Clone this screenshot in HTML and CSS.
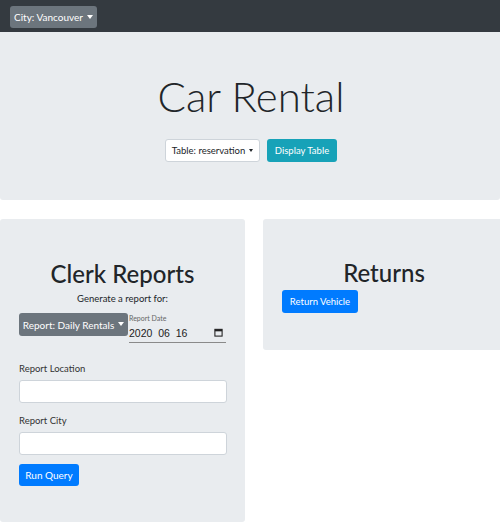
FILE: index.html
```html
<!DOCTYPE html>
<html>
<head>
<meta charset="utf-8">
<link rel="stylesheet" href="styles.css">
</head>
<body>
<nav class="navbar">
  <button class="btn btn-secondary nav-btn">City: Vancouver <span class="caret"></span></button>
</nav>
<header class="jumbotron">
  <h1 class="display">Car Rental</h1>
  <div class="jumbo-actions">
    <button class="btn btn-light">Table: reservation <span class="caret small"></span></button>
    <button class="btn btn-info">Display Table</button>
  </div>
</header>
<main class="row">
  <section class="card card-left">
    <h2 class="card-title">Clerk Reports</h2>
    <p class="lead-small">Generate a report for:</p>
    <div class="report-line">
      <button class="btn btn-secondary report-btn">Report: Daily Rentals <span class="caret"></span></button>
      <div class="date-field">
        <span class="date-label">Report Date</span>
        <div class="date-input">
          <span class="date-value">2020&nbsp;&nbsp;06&nbsp;&nbsp;16</span>
          <svg class="cal" viewBox="0 0 10 10" width="9" height="9"><rect x="1" y="1.5" width="8" height="7.5" fill="none" stroke="#222" stroke-width="1.2"/><rect x="1" y="1.5" width="8" height="2.2" fill="#222"/></svg>
        </div>
      </div>
    </div>
    <label class="field-label first">Report Location</label>
    <input class="text-input" type="text">
    <label class="field-label">Report City</label>
    <input class="text-input" type="text">
    <button class="btn btn-primary run-btn">Run Query</button>
  </section>
  <section class="card card-right">
    <h2 class="card-title returns-title">Returns</h2>
    <button class="btn btn-primary return-btn">Return Vehicle</button>
  </section>
</main>
</body>
</html>
```
FILE: styles.css
```css
* { box-sizing: border-box; }
html, body { margin: 0; padding: 0; }
body {
  width: 500px;
  height: 524px;
  overflow: hidden;
  background: #fff;
  font-family: Lato, "Noto Sans", sans-serif;
  color: #212529;
}
.btn {
  font-family: Lato, "Noto Sans", sans-serif;
  border: 1px solid transparent;
  border-radius: 3px;
  cursor: pointer;
  display: inline-flex;
  align-items: center;
  justify-content: center;
  padding: 0;
}
.caret {
  display: inline-block;
  width: 0;
  height: 0;
  border-left: 3px solid transparent;
  border-right: 3px solid transparent;
  border-top: 4px solid currentColor;
  margin-left: 4px;
  margin-top: -1px;
}
.caret.small {
  border-left-width: 2px;
  border-right-width: 2px;
  border-top-width: 3px;
}
.btn-secondary { background: #6c757d; color: #fff; }
.btn-light { background: #fff; color: #212529; border-color: #ced4da; }
.btn-info { background: #17a2b8; color: #fff; }
.btn-primary { background: #007bff; color: #fff; }

.navbar {
  background: #343a40;
  height: 32px;
  padding: 5px 10px;
}
.nav-btn {
  width: 87px;
  height: 22px;
  font-size: 10px;
}

.jumbotron {
  background: #e9ecef;
  height: 168px;
  border-radius: 0 0 3px 3px;
  display: flex;
  flex-direction: column;
  align-items: center;
  padding-top: 39px;
}
.display {
  margin: 0;
  font-weight: 300;
  font-size: 42px;
  line-height: 50px;
  margin-left: 2px;
}
.jumbo-actions {
  display: flex;
  gap: 7px;
  margin-top: 18px;
  margin-left: 2px;
}
.jumbo-actions .btn {
  height: 23px;
  font-size: 9.5px;
}
.btn-light { width: 95px; }
.btn-info { width: 70px; }

.row {
  display: flex;
  gap: 18px;
  margin-top: 19px;
  align-items: flex-start;
}
.card {
  background: #e9ecef;
  border-radius: 3px;
  flex-shrink: 0;
}
.card-left {
  width: 245px;
  height: 303px;
  padding: 40px 19px 0;
  display: flex;
  flex-direction: column;
}
.card-right {
  width: 240px;
  height: 131px;
  padding: 39px 19px 0;
  display: flex;
  flex-direction: column;
}
.card-title {
  margin: 0;
  font-size: 24px;
  font-weight: 500;
  line-height: 30px;
  text-align: center;
}
.returns-title { margin-left: 2px; }
.lead-small {
  margin: 3px 0 0;
  font-size: 9.5px;
  line-height: 14px;
  text-align: center;
}
.report-line {
  display: flex;
  align-items: flex-start;
  margin-top: 5px;
}
.report-btn {
  width: 109px;
  height: 23px;
  font-size: 10px;
  margin-top: 2px;
  flex-shrink: 0;
}
.date-field {
  display: flex;
  flex-direction: column;
  width: 98px;
  margin-left: 1px;
}
.date-label {
  font-size: 7px;
  line-height: 9px;
  color: #666;
  margin-top: 3px;
}
.date-input {
  display: flex;
  align-items: center;
  justify-content: space-between;
  height: 20px;
  border-bottom: 1px solid #8a8a8a;
  padding-right: 3px;
}
.date-value {
  font-family: "Liberation Sans", Arial, sans-serif;
  font-size: 10.5px;
  color: #222;
}
.cal { display: block; }
.field-label {
  font-size: 9.5px;
  line-height: 12px;
  color: #333;
  margin-top: 12px;
}
.field-label.first { margin-top: 20px; }
.field-label + .text-input { margin-top: 5px; }
.text-input {
  width: 208px;
  height: 23px;
  border: 1px solid #ced4da;
  border-radius: 3px;
  background: #fff;
  padding: 0 6px;
}
.run-btn {
  width: 60px;
  height: 22px;
  font-size: 10px;
  margin-top: 9px;
}
.return-btn {
  width: 76px;
  height: 23px;
  font-size: 9.5px;
  margin-top: 2px;
}
```
